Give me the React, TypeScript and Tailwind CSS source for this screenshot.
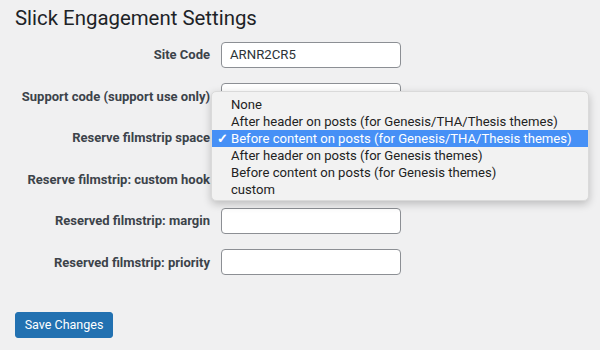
import React from "react";

const rows = [
  { label: "Site Code", value: "ARNR2CR5" },
  { label: "Support code (support use only)", value: "" },
  { label: "Reserve filmstrip space", value: null },
  { label: "Reserve filmstrip: custom hook", value: null },
  { label: "Reserved filmstrip: margin", value: "" },
  { label: "Reserved filmstrip: priority", value: "" },
];

const options = [
  "None",
  "After header on posts (for Genesis/THA/Thesis themes)",
  "Before content on posts (for Genesis/THA/Thesis themes)",
  "After header on posts (for Genesis themes)",
  "Before content on posts (for Genesis themes)",
  "custom",
];

export default function App() {
  return (
    <div
      className="relative w-[600px] h-[350px] overflow-hidden bg-[#f0f0f1] text-[#1d2327]"
      style={{ fontFamily: 'Roboto, "Liberation Sans", Arial, sans-serif' }}
    >
      <div className="h-[34px] pt-[3px] pl-[15px] text-[20.4px] leading-[30px] text-[#1d2327]">
        Slick Engagement Settings
      </div>
      <div className="flex flex-col">
        {rows.map((r, i) => (
          <div key={i} className="flex items-center h-[41.5px]">
            <div className="w-[221px] shrink-0 pr-[11px] text-right text-[13px] font-bold text-[#3c434a] whitespace-nowrap">
              {r.label}
            </div>
            {r.value !== null && (
              <div className="w-[180px] h-[26px] bg-white border border-[#8c8f94] rounded-[4px] flex items-center px-[8px] text-[13.2px] text-[#2c3338]">
                {r.value}
              </div>
            )}
          </div>
        ))}
      </div>
      <div className="pt-[29px] pl-[15px]">
        <button className="w-[98px] h-[26px] bg-[#2271b1] border border-[#2271b1] rounded-[3px] text-white text-[12.5px] leading-[24px]">
          Save Changes
        </button>
      </div>

      <div className="absolute left-[211px] top-[91px] w-[378px] h-[110px] bg-[#f2f2f2] rounded-[5px] border border-[#dadada] shadow-[0_3px_8px_rgba(0,0,0,0.22)] pt-[4px]">
        {options.map((o, i) => {
          const sel = i === 2;
          return (
            <div
              key={i}
              className={
                "relative h-[17px] leading-[17px] pl-[19px] text-[13.1px] whitespace-nowrap " +
                (sel ? "bg-[#4690f6] text-white" : "text-[#222]")
              }
            >
              {sel && <span className="absolute left-[5px] top-0 text-[13px] font-bold">✓</span>}
              {o}
            </div>
          );
        })}
      </div>
    </div>
  );
}
